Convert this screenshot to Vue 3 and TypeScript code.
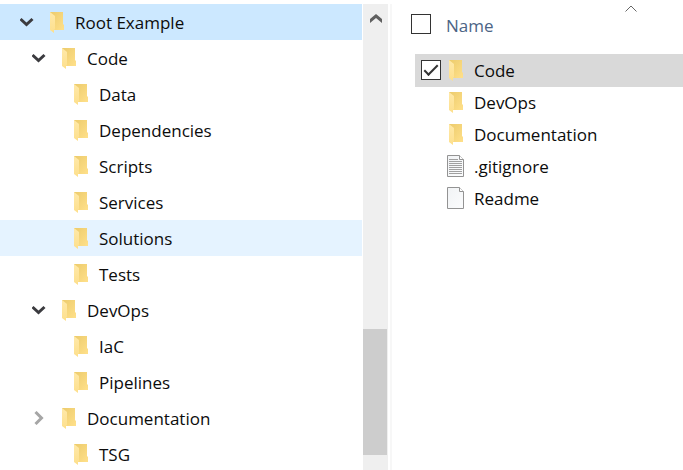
<script setup lang="ts">
import { ref } from 'vue'

interface TreeRow {
  id: number
  label: string
  depth: number
  arrow?: 'open' | 'closed'
}

interface FileRow {
  name: string
  kind: 'folder' | 'text' | 'blank'
  checked: boolean
}

const tree = ref<TreeRow[]>([
  { id: 1, label: 'Root Example', depth: 0, arrow: 'open' },
  { id: 2, label: 'Code', depth: 1, arrow: 'open' },
  { id: 3, label: 'Data', depth: 2 },
  { id: 4, label: 'Dependencies', depth: 2 },
  { id: 5, label: 'Scripts', depth: 2 },
  { id: 6, label: 'Services', depth: 2 },
  { id: 7, label: 'Solutions', depth: 2 },
  { id: 8, label: 'Tests', depth: 2 },
  { id: 9, label: 'DevOps', depth: 1, arrow: 'open' },
  { id: 10, label: 'IaC', depth: 2 },
  { id: 11, label: 'Pipelines', depth: 2 },
  { id: 12, label: 'Documentation', depth: 1, arrow: 'closed' },
  { id: 13, label: 'TSG', depth: 2 },
])

const files = ref<FileRow[]>([
  { name: 'Code', kind: 'folder', checked: true },
  { name: 'DevOps', kind: 'folder', checked: false },
  { name: 'Documentation', kind: 'folder', checked: false },
  { name: '.gitignore', kind: 'text', checked: false },
  { name: 'Readme', kind: 'blank', checked: false },
])

const selectedId = ref(1)
const highlightedId = ref(7)
const allChecked = ref(false)

function toggleArrow(row: TreeRow) {
  row.arrow = row.arrow === 'open' ? 'closed' : 'open'
}

function toggleAll() {
  files.value.forEach((file) => {
    file.checked = allChecked.value
  })
}
</script>

<template>
  <div class="explorer">
    <svg class="defs" width="0" height="0" aria-hidden="true">
      <defs>
        <linearGradient id="folder-back" x1="0" y1="0" x2="1" y2="1">
          <stop offset="0" stop-color="#eccb6c" />
          <stop offset="1" stop-color="#ffe08a" />
        </linearGradient>
        <linearGradient id="folder-front" x1="0" y1="0" x2="0" y2="1">
          <stop offset="0" stop-color="#ffe9a9" />
          <stop offset="1" stop-color="#fddf8c" />
        </linearGradient>
        <linearGradient id="sheet" x1="0" y1="0" x2="1" y2="1">
          <stop offset="0" stop-color="#f1f3f5" />
          <stop offset="1" stop-color="#fbfcfd" />
        </linearGradient>
        <symbol id="folder" viewBox="0 0 14 21">
          <path d="M0 0H13V12L14 13V18H4V5L0 1Z" fill="url(#folder-back)" />
          <path d="M0 0L5 4V17L4 18V21L0 18Z" fill="url(#folder-front)" />
        </symbol>
      </defs>
    </svg>

    <nav class="tree" aria-label="Folders">
      <ul class="tree-list">
        <li
          v-for="row in tree"
          :key="row.id"
          class="tree-row"
          :class="[
            `depth-${row.depth}`,
            { selected: row.id === selectedId, highlighted: row.id === highlightedId },
          ]"
        >
          <button
            v-if="row.arrow"
            type="button"
            class="arrow"
            :aria-expanded="row.arrow === 'open'"
            :aria-label="row.label"
            @click="toggleArrow(row)"
          >
            <svg v-if="row.arrow === 'open'" width="14" height="14" viewBox="0 0 14 14">
              <path d="M.5 4L6.500 9.500L12.500 4" fill="none" stroke="#3b3b3f" stroke-width="3" />
            </svg>
            <svg v-else width="14" height="14" viewBox="0 0 14 14">
              <path d="M3.500 1L9.500 7L3.500 13" fill="none" stroke="#a6a6a6" stroke-width="3" />
            </svg>
          </button>
          <span v-else class="arrow"></span>
          <button type="button" class="node" @click="selectedId = row.id">
            <svg class="folder" width="14" height="21"><use href="#folder" /></svg>
            <span class="label">{{ row.label }}</span>
          </button>
        </li>
      </ul>
    </nav>

    <div class="scrollbar">
      <button type="button" class="scroll-up" aria-label="Scroll up">
        <svg width="12" height="10" viewBox="0 0 12 10">
          <path d="M0 5L6 0L12 5V9L6 4L0 9Z" fill="#606060" />
        </svg>
      </button>
      <div class="track-before"></div>
      <div class="thumb"></div>
      <div class="track-after"></div>
    </div>

    <main class="content">
      <header class="content-head">
        <input
          v-model="allChecked"
          type="checkbox"
          class="check"
          aria-label="Select all"
          @change="toggleAll"
        />
        <button type="button" class="column-name">Name</button>
        <svg class="sort" width="12" height="7" viewBox="0 0 12 7">
          <path d="M.5 6.500L6 1L11.500 6.500" fill="none" stroke="#666" />
        </svg>
      </header>
      <ul class="file-list">
        <li v-for="file in files" :key="file.name">
          <label class="file-row" :class="{ picked: file.checked }">
            <input
              v-model="file.checked"
              type="checkbox"
              class="check"
              :class="{ quiet: !file.checked }"
            />
            <span class="file-icon">
              <svg v-if="file.kind === 'folder'" width="14" height="21"><use href="#folder" /></svg>
              <svg v-else width="17" height="22" viewBox="0 0 17 22">
                <path d="M.5 .5H12.500L16.500 4.500V21.500H.5Z" fill="url(#sheet)" stroke="#939393" />
                <path d="M12.500 .5V4.500H16.500" fill="#fff" stroke="#939393" />
                <path
                  v-if="file.kind === 'text'"
                  d="M2 4.500H11M2 6.500H15M2 8.500H15M2 10.500H15M2 12.500H15M2 14.500H15M2 16.500H15M2 18.500H15"
                  stroke="#a0a0a0"
                />
              </svg>
            </span>
            <span class="label">{{ file.name }}</span>
          </label>
        </li>
      </ul>
    </main>
  </div>
</template>

<style>
body {
  background: #fff;
}
</style>

<style scoped>
.explorer {
  display: flex;
  box-sizing: border-box;
  height: 100vh;
  padding-top: 4px;
  overflow: hidden;
  color: #0c0c0c;
  font-family: 'Open Sans', 'Noto Sans', sans-serif;
  font-size: 17px;
  line-height: 24px;
}

.defs {
  position: absolute;
}

button {
  padding: 0;
  border: 0;
  background: none;
  color: inherit;
  font: inherit;
}

svg {
  display: block;
  flex: none;
}

ul {
  margin: 0;
  padding: 0;
  list-style: none;
}

.tree {
  flex: 362;
  min-width: 0;
  overflow: hidden;
}

.tree-row {
  display: flex;
  align-items: center;
  gap: 16px;
  height: 36px;
  padding-left: 20px;
}

.tree-row.depth-1 {
  padding-left: 32px;
}

.tree-row.depth-2 {
  padding-left: 44px;
}

.tree-row.selected {
  background: #cce8ff;
}

.tree-row.highlighted {
  background: #e5f3ff;
}

.arrow {
  flex: none;
  width: 14px;
}

.node {
  display: flex;
  align-items: center;
  gap: 11px;
  white-space: nowrap;
}

.label {
  padding-top: 2px;
}

.scrollbar {
  display: flex;
  flex: none;
  flex-direction: column;
  width: 25px;
  margin: 0 2px 0 1px;
  background: #efefef;
}

.scroll-up {
  display: flex;
  justify-content: center;
  padding: 10px 0;
}

.track-before {
  flex: 295;
}

.thumb {
  flex: 126;
  margin-right: 1px;
  background: #cdcdcd;
}

.track-after {
  flex: 15;
}

.content {
  flex: 291;
  min-width: 0;
  border-left: 2px solid #f7f7f7;
}

.content-head {
  display: grid;
  grid-template-columns: 20px 1fr 12px;
  column-gap: 15px;
  height: 50px;
  padding: 0 46px 0 19px;
  box-sizing: border-box;
}

.content-head .check {
  margin-top: 10px;
}

.column-name {
  align-self: start;
  padding-top: 10px;
  color: #4c6485;
  text-align: left;
}

.sort {
  margin-top: 1px;
}

.file-list {
  margin-left: 23px;
}

.file-row {
  display: flex;
  align-items: center;
  height: 32px;
  padding-left: 6px;
}

.file-row.picked {
  background: #d9d9d9;
  box-shadow: 0 1px #d9d9d9;
}

.file-icon {
  display: flex;
  justify-content: center;
  width: 17px;
  margin: 0 10px 0 6px;
}

.check {
  display: grid;
  flex: none;
  place-items: center;
  box-sizing: border-box;
  width: 20px;
  height: 20px;
  margin: 0;
  border: 1px solid #333;
  background: #fff;
  appearance: none;
}

.check:checked::after {
  width: 12px;
  height: 5px;
  margin-bottom: 4px;
  border-bottom: 2px solid #333;
  border-left: 2px solid #333;
  content: '';
  transform: rotate(-45deg);
}

.check.quiet {
  opacity: 0;
}

.file-row:hover .check.quiet {
  opacity: 1;
}
</style>
